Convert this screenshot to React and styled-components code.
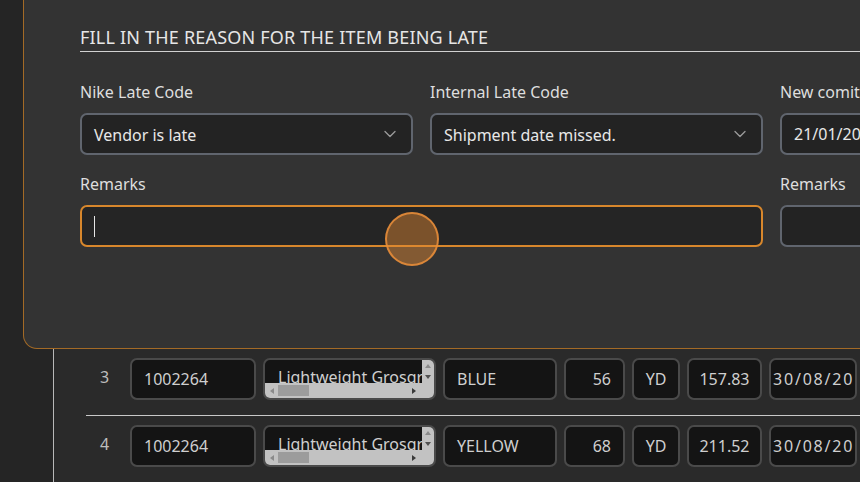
import styled, { createGlobalStyle } from "styled-components";
import { ChevronDown } from "lucide-react";

const Global = createGlobalStyle`
  html, body {
    margin: 0;
    background: #262626;
    overflow: hidden;
    font-family: "Noto Sans", "Open Sans", sans-serif;
  }
`;

const Page = styled.div`
  width: 860px;
  height: 482px;
  overflow: hidden;
  display: flex;
  flex-direction: column;
  background: #252525;
`;

const Panel = styled.section`
  flex-shrink: 0;
  width: 1000px;
  margin-left: 23px;
  padding: 25px 0 101px 56px;
  background: #333333;
  border: 1px solid #a36a26;
  border-top: none;
  border-radius: 0 0 0 14px;
`;

const Title = styled.h2`
  margin: 0 0 29px;
  padding-bottom: 2px;
  font-size: 18px;
  line-height: 24px;
  font-weight: 400;
  letter-spacing: 0.2px;
  color: #e6e6e6;
  border-bottom: 1px solid #d2d2d2;
  white-space: nowrap;
`;

const Fields = styled.div`
  display: grid;
  grid-template-columns: 333px 333px 333px;
  column-gap: 17px;
  row-gap: 18px;
`;

const Field = styled.div`
  display: flex;
  flex-direction: column;
  gap: 10px;
  grid-column: ${(p) => (p.$wide ? "1 / span 2" : "auto")};
`;

const Label = styled.label`
  font-size: 16px;
  line-height: 22px;
  color: #dedede;
  white-space: nowrap;
`;

const Select = styled.div`
  box-sizing: border-box;
  height: 42px;
  display: flex;
  align-items: center;
  justify-content: space-between;
  padding: 0 11px 0 12px;
  background: #232323;
  border: 2px solid #60656e;
  border-radius: 7px;
  font-size: 16px;
  color: #e8e8e8;
  white-space: nowrap;
  overflow: hidden;
  & span {
    padding-top: 1px;
  }
  & svg {
    color: #9a9a9a;
    flex-shrink: 0;
  }
`;

const TextInput = styled.div`
  position: relative;
  box-sizing: border-box;
  height: 42px;
  display: flex;
  align-items: center;
  padding: 0 12px;
  background: ${(p) => (p.$focused ? "#252525" : "#232323")};
  border: 2px solid ${(p) => (p.$focused ? "#d8872c" : "#60656e")};
  border-radius: 7px;
  font-size: 16px;
  color: #e8e8e8;
  white-space: nowrap;
`;

const Caret = styled.span`
  width: 1px;
  height: 21px;
  background: #e6e6e6;
`;

const Touch = styled.span`
  position: absolute;
  left: 303px;
  top: 5px;
  width: 50px;
  height: 50px;
  border-radius: 50%;
  background: rgba(228, 138, 52, 0.45);
  border: 2px solid rgba(234, 142, 58, 0.85);
  pointer-events: none;
`;

const Table = styled.div`
  flex: 1;
  margin-left: 53px;
  background: #2a2a2a;
  border-left: 1px solid #b8b8b8;
`;

const Row = styled.div`
  display: flex;
  align-items: center;
  gap: 7px;
  margin-left: 32px;
  padding: 9px 0 15px;
  border-bottom: 1px solid #c8c8c8;
`;

const Num = styled.span`
  width: 37px;
  flex-shrink: 0;
  text-align: center;
  font-size: 16px;
  color: #bdbdbd;
  margin-top: -4px;
`;

const Cell = styled.div`
  box-sizing: border-box;
  flex-shrink: 0;
  width: ${(p) => p.$w}px;
  height: 42px;
  display: flex;
  align-items: center;
  justify-content: ${(p) =>
    p.$align === "right" ? "flex-end" : p.$align === "center" ? "center" : "flex-start"};
  padding: ${(p) => (p.$tight ? "0 2px" : "0 12px")};
  background: #141414;
  border: 2px solid #4a4a4a;
  border-radius: 7px;
  font-size: 16px;
  color: #cfcfcf;
  white-space: nowrap;
  overflow: hidden;
`;

const DateText = styled.span`
  display: block;
  width: 80px;
  overflow: hidden;
  letter-spacing: 1.8px;
`;

const ScrollCell = styled.div`
  box-sizing: border-box;
  flex-shrink: 0;
  width: 173px;
  height: 42px;
  display: grid;
  grid-template-columns: 1fr 12px;
  grid-template-rows: 23px 15px;
  background: #141414;
  border: 2px solid #4a4a4a;
  border-radius: 7px;
  overflow: hidden;
`;

const ScrollText = styled.div`
  padding: 6px 0 0 13px;
  font-size: 16px;
  line-height: 22px;
  color: #cfcfcf;
  white-space: nowrap;
  overflow: hidden;
`;

const VBar = styled.div`
  grid-column: 2;
  grid-row: 1 / span 2;
  background: #c2c2c2;
  display: flex;
  flex-direction: column;
  align-items: center;
  gap: 7px;
  padding-top: 4px;
`;

const HBar = styled.div`
  grid-column: 1;
  grid-row: 2;
  background: #c2c2c2;
  display: flex;
  align-items: center;
  padding: 0 6px 0 5px;
`;

const Thumb = styled.span`
  width: 31px;
  height: 11px;
  margin-left: 4px;
  background: #9c9c9c;
`;

const Arrow = styled.span`
  width: 0;
  height: 0;
  border: 3px solid transparent;
  ${(p) => p.$dir === "up" && `border-bottom: 4px solid ${p.$c}; border-top-width: 0;`}
  ${(p) => p.$dir === "down" && `border-top: 4px solid ${p.$c}; border-bottom-width: 0;`}
  ${(p) => p.$dir === "left" && `border-right: 4px solid ${p.$c}; border-left-width: 0;`}
  ${(p) =>
    p.$dir === "right" && `border-left: 4px solid ${p.$c}; border-right-width: 0; margin-left: auto;`}
`;

const rows = [
  { n: 3, code: "1002264", desc: "Lightweight Grosgrain Ribbon", color: "BLUE", qty: "56", unit: "YD", amt: "157.83", date: "30/08/2024" },
  { n: 4, code: "1002264", desc: "Lightweight Grosgrain Ribbon", color: "YELLOW", qty: "68", unit: "YD", amt: "211.52", date: "30/08/2024" },
];

export default function App() {
  return (
    <Page>
      <Global />
      <Panel>
        <Title>FILL IN THE REASON FOR THE ITEM BEING LATE</Title>
        <Fields>
          <Field>
            <Label>Nike Late Code</Label>
            <Select>
              <span>Vendor is late</span>
              <ChevronDown size={20} strokeWidth={1.6} />
            </Select>
          </Field>
          <Field>
            <Label>Internal Late Code</Label>
            <Select>
              <span>Shipment date missed.</span>
              <ChevronDown size={20} strokeWidth={1.6} />
            </Select>
          </Field>
          <Field>
            <Label>New comitment date</Label>
            <TextInput>21/01/2025</TextInput>
          </Field>
          <Field $wide>
            <Label>Remarks</Label>
            <TextInput $focused>
              <Caret />
              <Touch />
            </TextInput>
          </Field>
          <Field>
            <Label>Remarks</Label>
            <TextInput />
          </Field>
        </Fields>
      </Panel>
      <Table>
        {rows.map((r) => (
          <Row key={r.n}>
            <Num>{r.n}</Num>
            <Cell $w={126}>{r.code}</Cell>
            <ScrollCell>
              <ScrollText>{r.desc}</ScrollText>
              <VBar>
                <Arrow $dir="up" $c="#8a8a8a" />
                <Arrow $dir="down" $c="#505050" />
              </VBar>
              <HBar>
                <Arrow $dir="left" $c="#8a8a8a" />
                <Thumb />
                <Arrow $dir="right" $c="#3a3a3a" />
              </HBar>
            </ScrollCell>
            <Cell $w={114}>{r.color}</Cell>
            <Cell $w={61} $align="right">{r.qty}</Cell>
            <Cell $w={48} $align="center">{r.unit}</Cell>
            <Cell $w={75} $align="center">{r.amt}</Cell>
            <Cell $w={88} $tight>
              <DateText>{r.date}</DateText>
            </Cell>
          </Row>
        ))}
      </Table>
    </Page>
  );
}
